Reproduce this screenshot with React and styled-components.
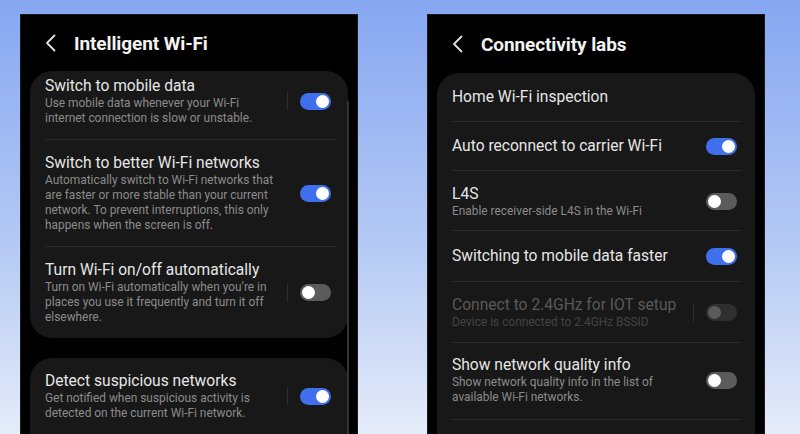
import React from 'react';
import styled, { createGlobalStyle } from 'styled-components';

const GlobalStyle = createGlobalStyle`
  body {
    margin: 0;
    font-family: Roboto, "Liberation Sans", sans-serif;
    background: linear-gradient(180deg, #86a7f1 0%, #b3c8f4 55%, #e6ecf9 100%);
  }
`;

const Stage = styled.div`
  height: 434px;
  overflow: hidden;
  display: flex;
  align-items: flex-start;
  gap: 69px;
  padding: 14px 0 0 20px;
  box-sizing: border-box;
`;

const Phone = styled.div`
  position: relative;
  width: 338px;
  height: 440px;
  background: #000;
  border: 1px solid #1c1c1c;
  border-bottom: none;
  box-sizing: border-box;
  padding: 0 9px;
  display: flex;
  flex-direction: column;
`;

const Header = styled.div`
  height: ${(p) => p.h}px;
  display: flex;
  align-items: center;
  gap: 18px;
  padding-left: 15px;
  flex-shrink: 0;
`;

const Title = styled.h1`
  margin: 0;
  font-size: 19px;
  font-weight: 700;
  color: #f2f2f2;
  letter-spacing: -0.1px;
`;

const Card = styled.div`
  background: #181818;
  border-radius: 22px;
  overflow: hidden;
  flex-shrink: 0;
  margin-bottom: ${(p) => p.gap || 0}px;
`;

const Row = styled.div`
  display: flex;
  align-items: center;
  padding: ${(p) => p.pt}px ${(p) => p.pr}px ${(p) => p.pb}px 15px;
`;

const TextBlock = styled.div`
  flex: 1;
  min-width: 0;
`;

const ItemTitle = styled.div`
  font-size: 15.6px;
  line-height: 20px;
  color: ${(p) => (p.disabled ? '#5a5a5a' : '#e6e6e6')};
  white-space: nowrap;
`;

const Sub = styled.div`
  font-size: 11.9px;
  line-height: 15px;
  color: ${(p) => (p.disabled ? '#444' : '#8b8b8b')};
  white-space: nowrap;
`;

const Sep = styled.div`
  width: 1px;
  height: 18px;
  background: #2e2e2e;
  margin-right: 12px;
`;

const Track = styled.div`
  position: relative;
  width: 31px;
  height: 17px;
  border-radius: 9px;
  flex-shrink: 0;
  background: ${(p) => (p.disabled ? '#2f2f2f' : p.on ? '#3f6fec' : '#5b5b5b')};
`;

const Knob = styled.div`
  position: absolute;
  top: 2px;
  left: ${(p) => (p.on ? 16 : 2)}px;
  width: 13px;
  height: 13px;
  border-radius: 50%;
  background: ${(p) => (p.disabled ? '#5a5a5a' : '#fff')};
`;

const Divider = styled.div`
  height: 1px;
  background: #2a2a2a;
  margin: 0 ${(p) => p.right}px 0 15px;
`;

const Blank = styled.div`
  height: 48px;
`;

const ScrollBar = styled.div`
  position: absolute;
  left: 326px;
  top: 86px;
  width: 2px;
  height: 400px;
  border-radius: 1px;
  background: #333;
`;

const Back = () => (
  <svg width="11" height="18" viewBox="0 0 11 18" fill="none">
    <path d="M9.5 1.5 L2 9 L9.5 16.5" stroke="#e0e0e0" strokeWidth="1.8" strokeLinecap="round" strokeLinejoin="round" />
  </svg>
);

const Toggle = ({ on, disabled }) => (
  <Track on={on} disabled={disabled}>
    <Knob on={on} disabled={disabled} />
  </Track>
);

const Item = ({ title, lines = [], on, toggle = true, sep, disabled, pt, pb, pr }) => (
  <Row pt={pt} pb={pb} pr={pr}>
    <TextBlock>
      <ItemTitle disabled={disabled}>{title}</ItemTitle>
      {lines.map((l) => (
        <Sub key={l} disabled={disabled}>{l}</Sub>
      ))}
    </TextBlock>
    {sep && <Sep />}
    {toggle && <Toggle on={on} disabled={disabled} />}
  </Row>
);

const App = () => (
  <>
    <GlobalStyle />
    <Stage>
      <Phone>
        <Header h={56}>
          <Back />
          <Title>Intelligent Wi-Fi</Title>
        </Header>
        <Card gap={20}>
          <Item
            pt={5} pb={13} pr={17} on sep
            title="Switch to mobile data"
            lines={['Use mobile data whenever your Wi-Fi', 'internet connection is slow or unstable.']}
          />
          <Divider right={12} />
          <Item
            pt={13} pb={13} pr={17} on
            title="Switch to better Wi-Fi networks"
            lines={[
              'Automatically switch to Wi-Fi networks that',
              'are faster or more stable than your current',
              'network. To prevent interruptions, this only',
              'happens when the screen is off.',
            ]}
          />
          <Divider right={12} />
          <Item
            pt={13} pb={13} pr={17} sep
            title="Turn Wi-Fi on/off automatically"
            lines={[
              'Turn on Wi-Fi automatically when you\u2019re in',
              'places you use it frequently and turn it off',
              'elsewhere.',
            ]}
          />
        </Card>
        <Card>
          <Item
            pt={13} pb={13} pr={17} on sep
            title="Detect suspicious networks"
            lines={['Get notified when suspicious activity is', 'detected on the current Wi-Fi network.']}
          />
          <Divider right={12} />
          <Blank />
        </Card>
        <ScrollBar />
      </Phone>

      <Phone>
        <Header h={58}>
          <Back />
          <Title>Connectivity labs</Title>
        </Header>
        <Card>
          <Item pt={14} pb={14} pr={18} toggle={false} title="Home Wi-Fi inspection" />
          <Divider right={13} />
          <Item pt={14} pb={14} pr={18} on title="Auto reconnect to carrier Wi-Fi" />
          <Divider right={13} />
          <Item pt={13} pb={11} pr={18} title="L4S" lines={['Enable receiver-side L4S in the Wi-Fi']} />
          <Divider right={13} />
          <Item pt={15} pb={15} pr={18} on title="Switching to mobile data faster" />
          <Divider right={13} />
          <Item
            pt={13} pb={12} pr={18} sep disabled
            title="Connect to 2.4GHz for IOT setup"
            lines={['Device is connected to 2.4GHz BSSID']}
          />
          <Divider right={13} />
          <Item
            pt={12} pb={14} pr={18}
            title="Show network quality info"
            lines={['Show network quality info in the list of', 'available Wi-Fi networks.']}
          />
          <Divider right={13} />
          <Blank />
        </Card>
      </Phone>
    </Stage>
  </>
);

export default App;
